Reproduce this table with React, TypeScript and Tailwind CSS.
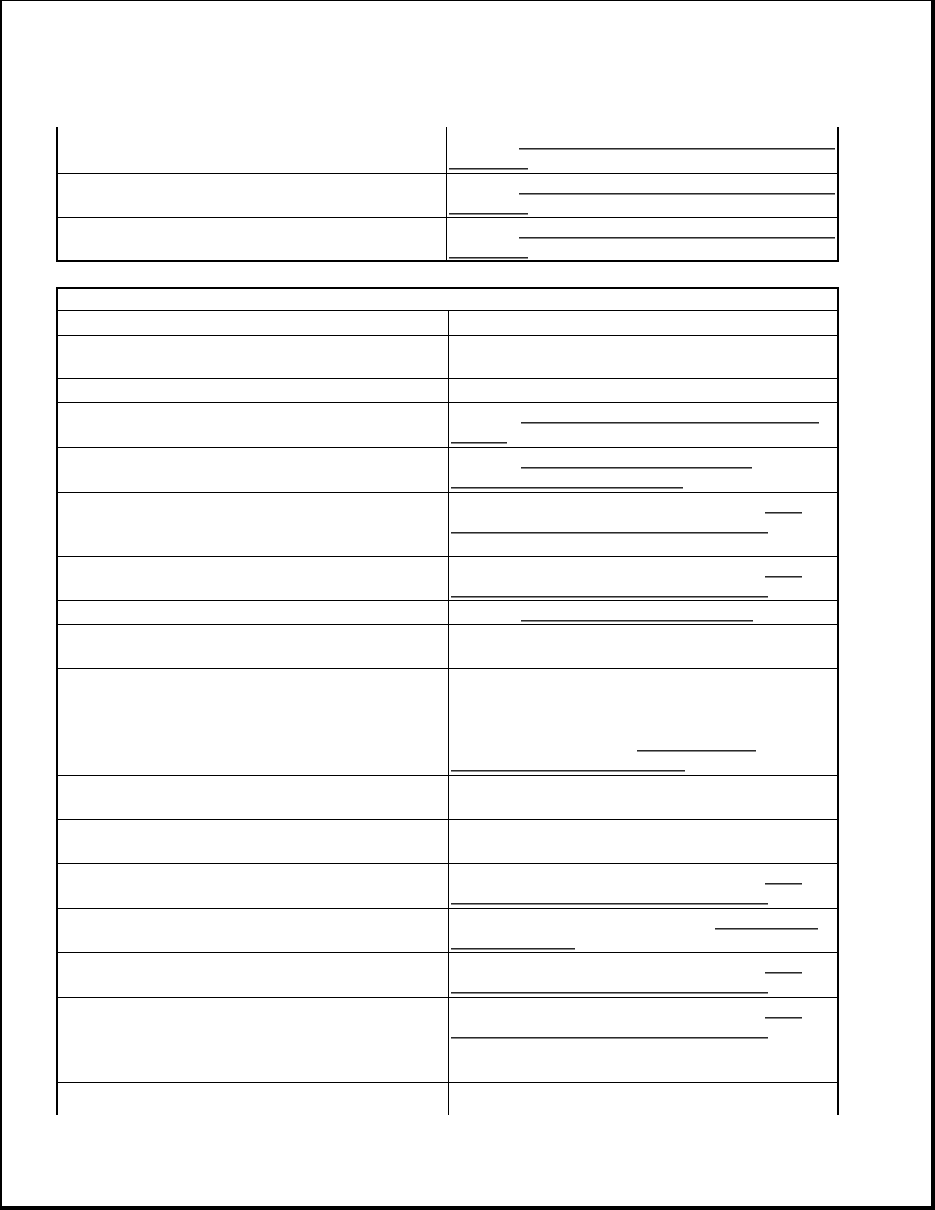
import React from "react";

type U = { ml: string; w: string } | null;

function Line({ u }: { u: U }) {
  return (
    <div className="h-[20.7px] flex items-end">
      {u ? <div className={`${u.ml} ${u.w} h-[2px] border-t border-[#2a2a2a] bg-[#8a8a8a]`} /> : null}
    </div>
  );
}

const A = (a: string, b: string): U[] => [
  { ml: "ml-[70px]", w: a },
  { ml: "ml-0", w: b },
];
const REF: U[] = [
  { ml: "ml-[314px]", w: "w-[37px]" },
  { ml: "ml-0", w: "w-[317px]" },
];

const t1Rows: { h: string; top: boolean; pt: string; lines: U[] }[] = [
  { h: "h-[46px]", top: false, pt: "pt-[2px]", lines: A("w-[316px]", "w-[79px]") },
  { h: "h-[44px]", top: true, pt: "pt-0", lines: A("w-[316px]", "w-[79px]") },
  { h: "h-[43px]", top: true, pt: "pt-0", lines: A("w-[316px]", "w-[79px]") },
];

const t2Rows: { h: string; lines: U[] }[] = [
  { h: "h-[25px]", lines: [] },
  { h: "h-[43px]", lines: [] },
  { h: "h-[24px]", lines: [] },
  { h: "h-[45px]", lines: A("w-[298px]", "w-[56px]") },
  { h: "h-[45px]", lines: A("w-[231px]", "w-[232px]") },
  { h: "h-[64px]", lines: REF },
  { h: "h-[44px]", lines: REF },
  { h: "h-[24px]", lines: [{ ml: "ml-[70px]", w: "w-[232px]" }] },
  { h: "h-[44px]", lines: [] },
  {
    h: "h-[107px]",
    lines: [null, null, null, { ml: "ml-[186px]", w: "w-[119px]" }, { ml: "ml-0", w: "w-[234px]" }],
  },
  { h: "h-[44px]", lines: [] },
  { h: "h-[44px]", lines: [] },
  { h: "h-[45px]", lines: REF },
  {
    h: "h-[44px]",
    lines: [
      { ml: "ml-[264px]", w: "w-[103px]" },
      { ml: "ml-0", w: "w-[124px]" },
    ],
  },
  { h: "h-[45px]", lines: REF },
  { h: "h-[85px]", lines: REF },
  { h: "h-[33px]", lines: [] },
];

export default function App() {
  return (
    <div
      className="w-[935px] h-[1210px] overflow-hidden bg-white border-t border-l-2 border-r-[4px] border-b-[4px] border-black pl-[54px] pt-[126px]"
      style={{ fontFamily: '"Liberation Serif", serif' }}
    >
      {/* Table 1 (continued from previous page) */}
      <div className="w-[783px] border-l-2 border-r-2 border-b-2 border-black flex flex-col">
        {t1Rows.map((r, i) => (
          <div key={i} className={`flex ${r.h} ${r.top ? "border-t border-black" : ""}`}>
            <div className="w-[389px] border-r border-black" />
            <div className={`flex-1 pl-[2px] ${r.pt}`}>
              {r.lines.map((u, j) => (
                <Line key={j} u={u} />
              ))}
            </div>
          </div>
        ))}
      </div>

      {/* Table 2 */}
      <div className="mt-[25px] w-[783px] border-l-2 border-r-2 border-t-2 border-black flex flex-col">
        <div className="h-[21px]" />
        {t2Rows.map((r, i) => (
          <div key={i} className={`flex ${r.h} border-t border-black`}>
            <div className="w-[391px] border-r border-black" />
            <div className="flex-1 pl-[2px]">
              {r.lines.map((u, j) => (
                <Line key={j} u={u} />
              ))}
            </div>
          </div>
        ))}
      </div>
    </div>
  );
}
